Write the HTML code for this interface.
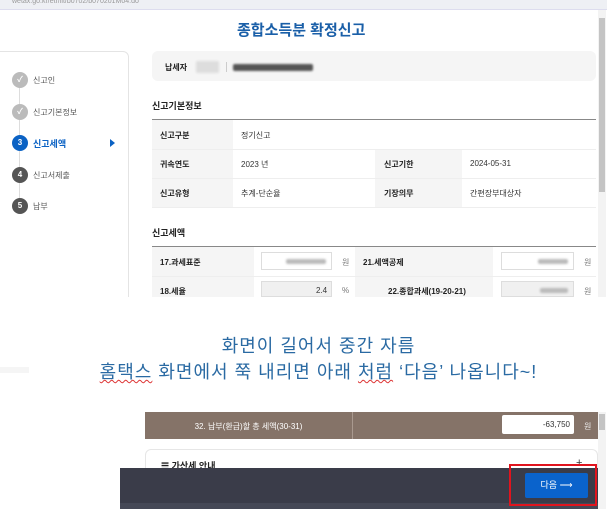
<!DOCTYPE html><html><head><meta charset="utf-8"><style>
*{margin:0;padding:0;box-sizing:border-box}
body{width:607px;height:509px;overflow:hidden;background:#fff;font-family:"Liberation Sans","Noto Sans CJK KR",sans-serif;position:relative;color:#333}
.a{position:absolute}
.t{font-size:8px;white-space:nowrap}
.b{font-weight:bold;color:#222}
.c{position:absolute;width:16px;height:16px;border-radius:50%;left:12px;color:#fff;font-size:8px;font-weight:bold;text-align:center;line-height:16px}
.bl{background:#ccc;border-radius:2px;filter:blur(1px)}
</style></head><body>
<div class="a" style="left:0;top:0;width:607px;height:9px;background:#eef0f4"></div>
<div class="a t" style="left:12px;top:-2px;color:#999;font-size:7px">wetax.go.kr/etr/lit/b0702/b070201M04.do</div>
<div class="a" style="left:0;top:9px;width:607px;height:1px;background:#dde"></div>
<div class="a" style="left:237px;top:19px;font-size:15px;font-weight:bold;color:#1a5fa8">종합소득분 확정신고</div>
<div class="a" style="left:-6px;top:51px;width:135px;height:260px;border:1px solid #e4e4e4;border-radius:6px"></div>
<div class="a" style="left:19px;top:85px;width:1px;height:120px;background:#ddd"></div>
<div class="c" style="top:72px;background:#bbb">✓</div>
<div class="c" style="top:104px;background:#bbb">✓</div>
<div class="c" style="top:135px;background:#0b62c4">3</div>
<div class="c" style="top:167px;background:#555">4</div>
<div class="c" style="top:198px;background:#555">5</div>
<div class="a t" style="left:33px;top:75px;color:#555">신고인</div>
<div class="a t" style="left:33px;top:107px;color:#555">신고기본정보</div>
<div class="a t" style="left:33px;top:137px;color:#0b62c4;font-weight:bold;font-size:9px">신고세액</div>
<div class="a" style="left:110px;top:139px;border-left:5px solid #0b62c4;border-top:4px solid transparent;border-bottom:4px solid transparent"></div>
<div class="a t" style="left:33px;top:170px;color:#555">신고서제출</div>
<div class="a t" style="left:33px;top:201px;color:#555">납부</div>
<div class="a" style="left:152px;top:51px;width:444px;height:30px;background:#f5f5f5;border-radius:6px"></div>
<div class="a t b" style="left:165px;top:62px">납세자</div>
<div class="a bl" style="left:196px;top:61px;width:23px;height:12px;background:#ddd"></div>
<div class="a" style="left:226px;top:62px;width:1px;height:10px;background:#ccc"></div>
<div class="a bl" style="left:233px;top:64px;width:80px;height:7px;background:#555"></div>
<div class="a b" style="left:152px;top:99px;font-size:9px">신고기본정보</div>
<div class="a" style="left:152px;top:119px;width:444px;height:1px;background:#888"></div>
<div class="a" style="left:152px;top:120px;width:81px;height:87px;background:#f5f5f5"></div>
<div class="a" style="left:375px;top:149px;width:87px;height:58px;background:#f5f5f5"></div>
<div class="a" style="left:152px;top:149px;width:444px;height:1px;background:#eee"></div>
<div class="a" style="left:152px;top:178px;width:444px;height:1px;background:#eee"></div>
<div class="a" style="left:152px;top:207px;width:444px;height:1px;background:#eee"></div>
<div class="a t b" style="left:160px;top:130px">신고구분</div><div class="a t" style="left:241px;top:130px">정기신고</div>
<div class="a t b" style="left:160px;top:159px">귀속연도</div><div class="a t" style="left:241px;top:159px">2023 년</div>
<div class="a t b" style="left:384px;top:159px">신고기한</div><div class="a t" style="left:470px;top:159px">2024-05-31</div>
<div class="a t b" style="left:160px;top:188px">신고유형</div><div class="a t" style="left:241px;top:188px">추계-단순율</div>
<div class="a t b" style="left:384px;top:188px">기장의무</div><div class="a t" style="left:470px;top:188px">간편장부대상자</div>
<div class="a b" style="left:152px;top:226px;font-size:9px">신고세액</div>
<div class="a" style="left:152px;top:246px;width:444px;height:1px;background:#888"></div>
<div class="a" style="left:152px;top:247px;width:102px;height:50px;background:#f5f5f5"></div>
<div class="a" style="left:355px;top:247px;width:138px;height:50px;background:#f5f5f5"></div>
<div class="a" style="left:152px;top:276px;width:444px;height:1px;background:#eee"></div>
<div class="a t b" style="left:160px;top:257px">17.과세표준</div>
<div class="a t b" style="left:363px;top:257px">21.세액공제</div>
<div class="a t b" style="left:160px;top:286px">18.세율</div>
<div class="a t b" style="left:388px;top:286px">22.종합과세(19-20-21)</div>
<div class="a" style="left:261px;top:252px;width:71px;height:18px;border:1px solid #ddd;background:#fff"></div>
<div class="a bl" style="left:286px;top:259px;width:40px;height:5px;background:#bbb"></div>
<div class="a" style="left:501px;top:252px;width:73px;height:18px;border:1px solid #ddd;background:#fff"></div>
<div class="a bl" style="left:538px;top:259px;width:30px;height:5px;background:#bbb"></div>
<div class="a" style="left:261px;top:281px;width:71px;height:16px;border:1px solid #ddd;background:#f0f0f0"></div>
<div class="a t" style="left:316px;top:286px">2.4</div>
<div class="a" style="left:501px;top:281px;width:73px;height:16px;border:1px solid #ddd;background:#f0f0f0"></div>
<div class="a bl" style="left:540px;top:288px;width:28px;height:5px;background:#bbb"></div>
<div class="a t" style="left:342px;top:257px;color:#777">원</div><div class="a t" style="left:584px;top:257px;color:#777">원</div>
<div class="a t" style="left:342px;top:286px;color:#777">%</div><div class="a t" style="left:584px;top:286px;color:#777">원</div>
<div class="a" style="left:598px;top:10px;width:8px;height:287px;background:#f3f3f3"></div>
<div class="a" style="left:599px;top:18px;width:6px;height:174px;background:#c4c4c4"></div>
<div class="a" style="left:0;top:297px;width:607px;height:20px;background:#fff"></div>
<div class="a" style="left:0;top:367px;width:29px;height:6px;background:#f5f5f5"></div>
<div class="a" style="left:0;top:333px;width:607px;text-align:center;font-size:18px;color:#2a6aa3;line-height:26px;font-family:'Liberation Sans','Noto Sans CJK KR',sans-serif;letter-spacing:1px;padding-left:30px">화면이 길어서 중간 자름<br><span style="text-decoration:underline wavy #d33;text-decoration-thickness:1px">홈택스</span> 화면에서 쭉 내리면 아래 <span style="text-decoration:underline wavy #d33;text-decoration-thickness:1px">처럼</span> ‘다음’ 나옵니다~!</div>
<div class="a" style="left:120px;top:412px;width:478px;height:97px;background:#fff"></div>
<div class="a" style="left:145px;top:412px;width:453px;height:27px;background:#857368"></div>
<div class="a" style="left:352px;top:412px;width:1px;height:27px;background:#a9998f"></div>
<div class="a t" style="left:145px;top:421px;width:207px;text-align:center;color:#fff">32. 납부(환급)할 총 세액(30-31)</div>
<div class="a" style="left:502px;top:415px;width:72px;height:19px;background:#fff;border-radius:2px"></div>
<div class="a t" style="left:502px;top:420px;width:68px;text-align:right;color:#333">-63,750</div>
<div class="a t" style="left:584px;top:421px;color:#eee">원</div>
<div class="a" style="left:145px;top:449px;width:453px;height:30px;border:1px solid #e6e6e6;border-radius:6px"></div>
<div class="a t b" style="left:161px;top:459px;font-size:9px">☰ 가산세 안내</div>
<div class="a t" style="left:576px;top:457px;font-size:11px;color:#333">+</div>
<div class="a" style="left:120px;top:468px;width:478px;height:41px;background:#3a3c49"></div>
<div class="a" style="left:120px;top:503px;width:478px;height:6px;background:#454856"></div>
<div class="a" style="left:525px;top:473px;width:63px;height:25px;background:#0a63cc;border-radius:2px;color:#fff;font-size:9px;text-align:center;line-height:25px">다음 ⟶</div>
<div class="a" style="left:509px;top:464px;width:88px;height:42px;border:2.5px solid #e0141e"></div>
<div class="a" style="left:598px;top:412px;width:8px;height:97px;background:#f3f3f3"></div>
<div class="a" style="left:599px;top:414px;width:6px;height:16px;background:#c4c4c4"></div>
</body></html>
